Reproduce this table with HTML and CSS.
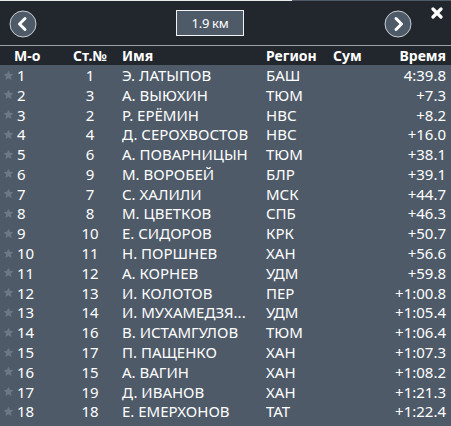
FILE: index.html
```html
<!DOCTYPE html>
<html lang="ru">
<head>
<meta charset="utf-8">
<link rel="stylesheet" href="styles.css">
</head>
<body>
<div class="panel">
  <div class="topline"></div>
  <div class="toolbar">
    <button class="nav prev" aria-label="prev">
      <svg width="28" height="28" viewBox="0 0 28 28"><circle cx="14" cy="14" r="13" fill="#4e5a68" stroke="#c9ced4" stroke-width="1"/><path d="M16 8.5 L10.5 14 L16 19.5" fill="none" stroke="#fff" stroke-width="3" stroke-linecap="round" stroke-linejoin="round"/></svg>
    </button>
    <div class="dist">1.9 км</div>
    <button class="nav next" aria-label="next">
      <svg width="28" height="28" viewBox="0 0 28 28"><circle cx="14" cy="14" r="13" fill="#4e5a68" stroke="#c9ced4" stroke-width="1"/><path d="M12 8.5 L17.5 14 L12 19.5" fill="none" stroke="#fff" stroke-width="3" stroke-linecap="round" stroke-linejoin="round"/></svg>
    </button>
    <button class="close" aria-label="close">
      <svg width="12" height="12" viewBox="0 0 12 12"><path d="M2 2 L10 10 M10 2 L2 10" stroke="#fff" stroke-width="3.2" stroke-linecap="round"/></svg>
    </button>
  </div>
  <div class="sep"></div>
  <div class="row head">
    <span class="c-place">М-о</span>
    <span class="c-bib">Ст.№</span>
    <span class="c-name">Имя</span>
    <span class="c-reg">Регион</span>
    <span class="c-sum">Сум</span>
    <span class="c-time">Время</span>
  </div>
  <div class="body" id="body"></div>
</div>
<script>
const data = [
["1","1","Э. ЛАТЫПОВ","БАШ","4:39.8"],
["2","3","А. ВЫЮХИН","ТЮМ","+7.3"],
["3","2","Р. ЕРЁМИН","НВС","+8.2"],
["4","4","Д. СЕРОХВОСТОВ","НВС","+16.0"],
["5","6","А. ПОВАРНИЦЫН","ТЮМ","+38.1"],
["6","9","М. ВОРОБЕЙ","БЛР","+39.1"],
["7","7","С. ХАЛИЛИ","МСК","+44.7"],
["8","8","М. ЦВЕТКОВ","СПБ","+46.3"],
["9","10","Е. СИДОРОВ","КРК","+50.7"],
["10","11","Н. ПОРШНЕВ","ХАН","+56.6"],
["11","12","А. КОРНЕВ","УДМ","+59.8"],
["12","13","И. КОЛОТОВ","ПЕР","+1:00.8"],
["13","14","И. МУХАМЕДЗЯ...","УДМ","+1:05.4"],
["14","16","В. ИСТАМГУЛОВ","ТЮМ","+1:06.4"],
["15","17","П. ПАЩЕНКО","ХАН","+1:07.3"],
["16","15","А. ВАГИН","ХАН","+1:08.2"],
["17","19","Д. ИВАНОВ","ХАН","+1:21.3"],
["18","18","Е. ЕМЕРХОНОВ","ТАТ","+1:22.4"]
];
const star = '<svg class="star" width="11" height="11" viewBox="0 0 24 24"><path d="M12 1.5l3.2 6.9 7.5.8-5.6 5.1 1.6 7.4L12 17.9l-6.7 3.8 1.6-7.4L1.3 9.2l7.5-.8z" fill="#6c7886"/></svg>';
const body = document.getElementById('body');
body.innerHTML = data.map(r => `<div class="row">${star}<span class="c-place">${r[0]}</span><span class="c-bib">${r[1]}</span><span class="c-name">${r[2]}</span><span class="c-reg">${r[3]}</span><span class="c-sum"></span><span class="c-time">${r[4]}</span></div>`).join('');
</script>
</body>
</html>
```
FILE: styles.css
```css
html, body { margin: 0; padding: 0; }
body {
  width: 451px;
  height: 426px;
  overflow: hidden;
  background: #4e5a68;
  font-family: "Noto Sans", "Open Sans", sans-serif;
  color: #fff;
}
.panel { width: 451px; }
.topline { height: 1px; width: 292px; background: #e8e8e8; }
.toolbar {
  background: #22262d;
  height: 44px;
  position: relative;
  display: flex;
  align-items: center;
}
.nav {
  background: none; border: 0; padding: 0; width: 28px; height: 28px;
  display: block;
}
.nav svg { display: block; }
.prev { margin-left: 9px; margin-top: 1px; }
.next { margin-left: auto; margin-right: 39px; margin-top: 1px; }
.dist {
  position: absolute;
  left: 176px; top: 9px;
  width: 66px; height: 24px;
  border: 1px solid #f2f2f2;
  background: #4e5a68;
  display: flex; align-items: center; justify-content: center;
  font-size: 13px;
  letter-spacing: -0.3px;
}
.close {
  position: absolute; right: 8px; top: 6px;
  background: none; border: 0; padding: 0; width: 12px; height: 12px;
}
.close svg { display: block; }
.sep { height: 1px; background: #9aa0a7; }
.row {
  display: flex;
  align-items: center;
  height: 19.8px;
  position: relative;
  font-size: 15px;
  white-space: nowrap;
}
.head {
  background: #22262d;
  height: 19px;
  font-weight: bold;
  font-size: 14px;
}
.star { position: absolute; left: 3px; top: 4.5px; }
.c-place { width: 60px; padding-left: 17px; box-sizing: border-box; }
.head .c-place { padding-left: 14px; }
.c-bib { width: 60px; text-align: center; }
.c-name { width: 144px; padding-left: 2px; overflow: hidden; }
.c-reg { width: 67px; }
.c-sum { width: 40px; }
.c-time { flex: 1; text-align: right; padding-right: 5px; }
```
